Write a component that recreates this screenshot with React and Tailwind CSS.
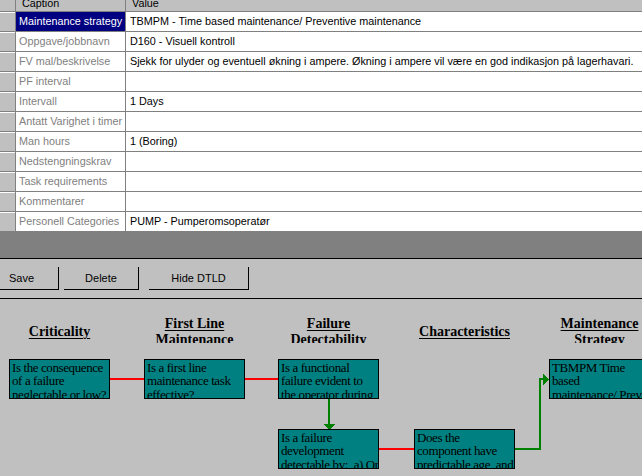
import React from "react";

const rows = [
  ["Maintenance strategy", "TBMPM - Time based maintenance/ Preventive maintenance", true],
  ["Oppgave/jobbnavn", "D160 - Visuell kontroll"],
  ["FV mal/beskrivelse", "Sjekk for ulyder og eventuell økning i ampere. Økning i ampere vil være en god indikasjon på lagerhavari."],
  ["PF interval", ""],
  ["Intervall", "1 Days"],
  ["Antatt Varighet i timer", ""],
  ["Man hours", "1 (Boring)"],
  ["Nedstengningskrav", ""],
  ["Task requirements", ""],
  ["Kommentarer", ""],
  ["Personell Categories", "PUMP - Pumperomsoperatør"],
];

function Box({ left, top, children }) {
  return (
    <div
      className="absolute h-[40px] w-[101px] overflow-hidden border border-black bg-[#008080] pl-[2px] pt-px text-[13px] leading-[13.3px] tracking-[-0.4px] text-black"
      style={{ left, top }}
    >
      {children}
    </div>
  );
}

function Title({ left, top, twoLine, children }) {
  return (
    <div
      className={
        "absolute w-[141px] overflow-hidden text-center text-[14px] font-bold leading-[16px] text-black " +
        (twoLine ? "h-[27px]" : "h-[16px]")
      }
      style={{ left, top }}
    >
      <span className="underline decoration-1 underline-offset-[2px]">{children}</span>
    </div>
  );
}

export default function App() {
  return (
    <div className="relative h-[476px] w-[642px] overflow-hidden bg-[#c0c0c0] font-['Liberation_Sans',Arial,sans-serif] text-[10.8px] text-black">
      {/* Grid */}
      <div className="bg-white">
        <div className="flex h-[12px] border-b border-[#808080] bg-[#c0c0c0]">
          <div className="w-[16px] border-r border-[#808080]" />
          <div className="w-[110px] overflow-hidden border-r border-[#808080] pl-[6px]">
            <div className="-mt-[2px] leading-[11px]">Caption</div>
          </div>
          <div className="flex-1 overflow-hidden pl-[6px]">
            <div className="-mt-[2px] leading-[11px]">Value</div>
          </div>
        </div>
        {rows.map(([cap, val, sel], i) => (
          <div key={i} className="flex h-[20px]">
            <div className="w-[16px] border-r border-[#808080]">
              <div className="h-full border-t border-b border-t-white border-b-[#808080] bg-[#c0c0c0]" />
            </div>
            <div
              className={
                "flex w-[110px] items-center overflow-hidden whitespace-nowrap border-b border-r border-[#808080] pl-[3px] " +
                (sel ? "bg-[#000080] text-white" : "bg-white text-[#808080]")
              }
            >
              {cap}
            </div>
            <div className="flex flex-1 items-center overflow-hidden whitespace-nowrap border-b border-[#808080] pl-[4px] text-black">
              {val}
            </div>
          </div>
        ))}
      </div>

      {/* Dark splitter area */}
      <div className="h-[26px] bg-[#808080]" />

      {/* Toolbar */}
      <div className="flex h-[41px] items-start border-y border-black bg-[#c0c0c0] pt-[8px] text-[11px]">
        <button className="-ml-[15px] flex h-[23px] w-[74px] items-center justify-center border-b border-r border-black">
          Save
        </button>
        <button className="ml-[5px] flex h-[23px] w-[75px] items-center justify-center border-b border-r border-black">
          Delete
        </button>
        <button className="ml-[10px] flex h-[23px] w-[100px] items-center justify-center border-b border-r border-black">
          Hide DTLD
        </button>
      </div>

      {/* Diagram canvas */}
      <div className="relative h-[177px] font-['Liberation_Serif','Times_New_Roman',serif]">
        <svg className="absolute left-0 top-0" width="642" height="177" shapeRendering="crispEdges">
          <rect x="110" y="79" width="34" height="2" fill="#ff0000" />
          <rect x="245" y="79" width="33" height="2" fill="#ff0000" />
          <rect x="379" y="149" width="35" height="2" fill="#ff0000" />
          <rect x="328" y="100" width="2" height="26" fill="#008000" />
          <polygon points="323,125 335,125 329,131" fill="#008000" />
          <rect x="515" y="149" width="26" height="2" fill="#008000" />
          <rect x="539" y="79" width="2" height="72" fill="#008000" />
          <rect x="539" y="79" width="5" height="2" fill="#008000" />
          <polygon points="543,75 543,86 549,80" fill="#008000" />
        </svg>

        <Title left={-11} top={25}>Criticality</Title>
        <Title left={124} top={17} twoLine>
          First Line
          <br />
          Maintenance
        </Title>
        <Title left={258} top={17} twoLine>
          Failure
          <br />
          Detectability
        </Title>
        <Title left={394} top={25}>Characteristics</Title>
        <Title left={529} top={17} twoLine>
          Maintenance
          <br />
          Strategy
        </Title>

        <Box left={9} top={60}>Is the consequence of a failure neglectable or low?</Box>
        <Box left={144} top={60}>Is a first line maintenance task effective?</Box>
        <Box left={278} top={60}>Is a functional failure evident to the operator during normal duties?</Box>
        <Box left={278} top={130}>
          Is a failure development <span className="whitespace-nowrap">detectable by:&nbsp; a) Operator b) Condition monitoring?</span>
        </Box>
        <Box left={414} top={130}>Does the component have predictable age, and wear out characteristics?</Box>
        <Box left={549} top={60}>
          TBMPM Time
          <br />
          based
          <br />
          <span className="whitespace-nowrap">maintenance/ Preventive maintenance</span>
        </Box>
      </div>
    </div>
  );
}
